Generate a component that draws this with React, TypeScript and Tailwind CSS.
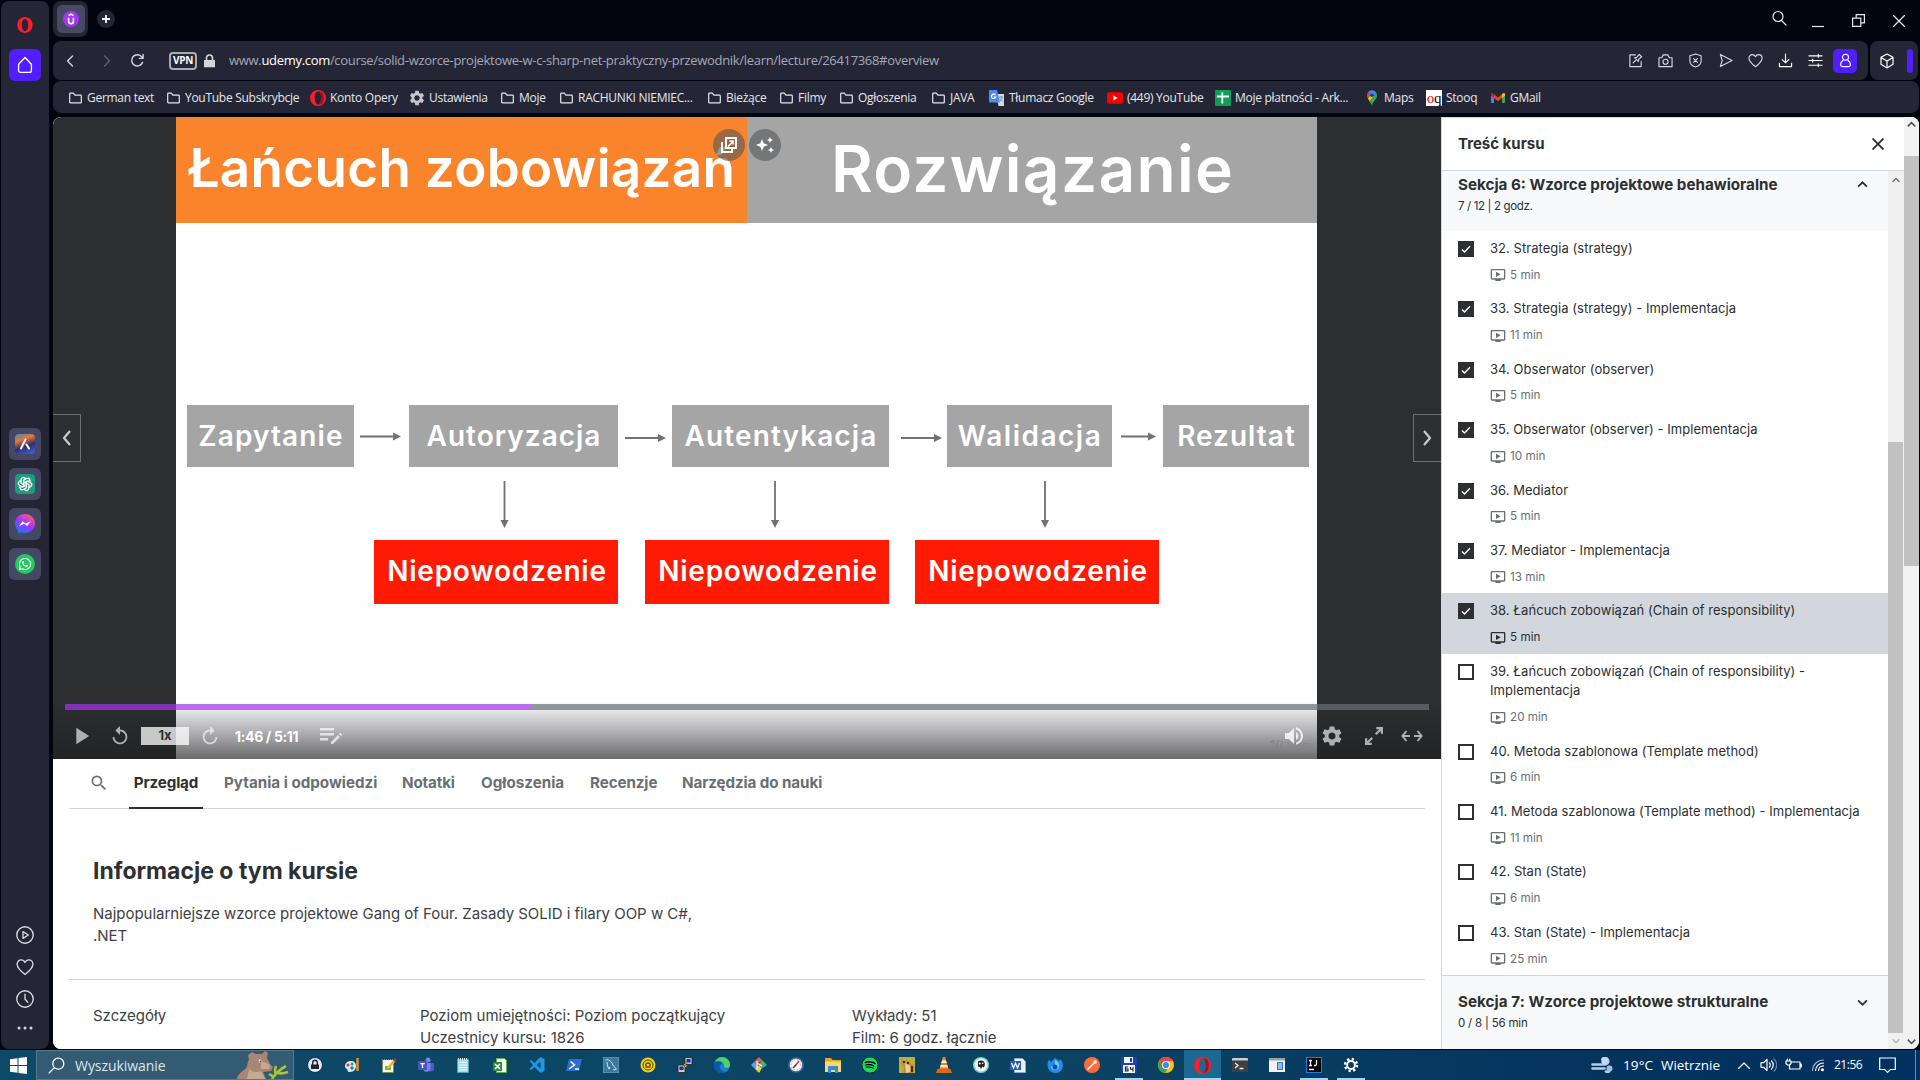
import React from "react";
import {
  MdPlayArrow, MdReplay, MdSettings, MdOndemandVideo, MdVolumeUp, MdSearch,
} from "react-icons/md";
import { FaWhatsapp, FaSpotify } from "react-icons/fa";
import { TbBrandOpenai } from "react-icons/tb";

const UI = "font-['Open_Sans','Noto_Sans',sans-serif]";
const UDEMY = "font-['Inter',sans-serif]";

type SvgProps = { className?: string; children: React.ReactNode; box?: string };
const Line = ({ className = "size-4", children, box = "0 0 16 16" }: SvgProps) => (
  <svg viewBox={box} className={"shrink-0 " + className} fill="none" stroke="currentColor" strokeWidth="1.2" strokeLinecap="round" strokeLinejoin="round">
    {children}
  </svg>
);
const Art = ({ className = "size-4", children, box = "0 0 16 16" }: SvgProps) => (
  <svg viewBox={box} className={"shrink-0 " + className}>{children}</svg>
);

const OperaO = ({ className = "size-4" }: { className?: string }) => (
  <Art className={className}>
    <path fillRule="evenodd" fill="#fa1e2d" d="M8 0a8 8 0 1 0 0 16A8 8 0 0 0 8 0Zm0 1.6c2 0 3.3 2.9 3.3 6.4S10 14.400 8 14.400 4.700 11.500 4.700 8 6 1.600 8 1.600Z" />
    <path fill="#a5101c" d="M8 1.600c2-.9 4.300.3 5.300 2.500 1 2.400 1 5.400 0 7.800-1 2.200-3.300 3.400-5.300 2.500 2 0 3.300-2.900 3.300-6.400S10 1.600 8 1.600Z" />
  </Art>
);
const RailOpera = () => (
  <Art className="mt-4 size-4">
    <path fillRule="evenodd" fill="#fa1e2d" d="M8 0C3.600 0 .3 3.600.3 8S3.600 16 8 16s7.700-3.600 7.700-8S12.400 0 8 0Zm0 2c2 0 3.200 2.700 3.200 6S10 14 8 14s-3.200-2.700-3.200-6S6 2 8 2Z" />
  </Art>
);
const Folder = () => (
  <Line className="h-[14px] w-[13px]" box="0 0 13 14">
    <path d="M.7 11.200V2.800c0-.4.3-.7.700-.7h2.900l1.700 2.100h5.600c.4 0 .7.300.7.700v6.300c0 .400-.3.700-.7.700H1.400c-.400 0-.7-.300-.7-.700Z" />
  </Line>
);
const Heart = ({ className = "size-4" }: { className?: string }) => (
  <Line className={className}><path d="M8 14.600C4 11.600 1 9 1 5.600 1 3.200 2.700 1.700 4.600 1.700 6 1.700 7.300 2.500 8 4c.7-1.500 2-2.300 3.400-2.300 1.900 0 3.600 1.500 3.600 3.900 0 3.400-3 6-7 9Z" /></Line>
);

/* ---------- browser chrome ---------- */

function SideRail() {
  const tile = "flex size-8 items-center justify-center rounded-md bg-[#454863]";
  return (
    <aside className="ml-px mt-px flex h-[1048px] w-12 shrink-0 flex-col items-center rounded-lg bg-[#242635] text-[#d7d9e2]">
      <RailOpera />
      <div className="mt-4 flex size-8 shrink-0 items-center justify-center rounded-md bg-[#501eff] text-white">
        <Line className="size-[18px]"><path d="M2.300 7.300 8 1.300l5.700 6v5.500c0 1-.7 1.700-1.700 1.700H4c-1 0-1.700-.7-1.700-1.700Z" /></Line>
      </div>
      <div className="mt-[347px] flex flex-col gap-2">
        <div className={tile}>
          <div className="flex size-5 items-center justify-center rounded bg-[linear-gradient(160deg,#3a8ecb_0%,#e8743a_30%,#2a2f6a_60%,#4466ff_100%)]">
            <Line className="size-4 text-white"><path strokeWidth="2" d="m4 12.500 4.500-9M9.500 8.500l2.500 4" /></Line>
          </div>
        </div>
        <div className={tile}><div className="flex size-5 items-center justify-center rounded bg-[#1f9b7d] text-white"><TbBrandOpenai className="size-4" /></div></div>
        <div className={tile}>
          <svg className="size-5" viewBox="0 0 20 20">
            <defs><linearGradient id="msg" x1="0.200" y1="1" x2="0.800" y2="0"><stop offset="0" stopColor="#0a7cff" /><stop offset=".5" stopColor="#a034ff" /><stop offset="1" stopColor="#ff5c70" /></linearGradient></defs>
            <path fill="url(#msg)" d="M10 0C4.400 0 0 4.100 0 9.500c0 2.900 1.200 5.400 3.200 7.100V20l3.200-1.700c1.100.4 2.300.6 3.600.6 5.600 0 10-4.100 10-9.400S15.600 0 10 0Z" />
            <path fill="#fff" d="m4 12.300 3.500-5.100 3.200 2.300L16 7l-3.800 5-3-2.300Z" />
          </svg>
        </div>
        <div className={tile}><div className="flex size-5 items-center justify-center rounded-full bg-[#25c863] text-white"><FaWhatsapp className="size-[14px]" /></div></div>
      </div>
      <div className="mt-[346px] flex flex-col items-center gap-[14px]">
        <Line className="size-[18px]"><circle cx="8" cy="8" r="7.300" /><path d="M6.200 5v6l4.800-3Z" /></Line>
        <Heart className="size-[18px]" />
        <Line className="size-[18px]"><circle cx="8" cy="8" r="7.300" /><path d="M8 3.600V8l2.500 3" /></Line>
        <Art className="size-4"><g fill="#d7d9e2"><circle cx="2" cy="6" r="1.500" /><circle cx="8" cy="6" r="1.500" /><circle cx="14" cy="6" r="1.500" /></g></Art>
      </div>
    </aside>
  );
}

function TabStrip() {
  return (
    <div className="flex h-[41px] items-start text-[#e8e8ee]">
      <div className="mt-px flex h-9 w-[35px] items-center justify-center rounded-lg bg-[#242635]">
        <div className="flex size-7 items-center justify-center rounded-[5px] bg-[#474a63]">
          <Art className="size-4"><circle cx="8" cy="8" r="8" fill="#a435f0" /><path fill="none" stroke="#fff" strokeWidth="1.600" d="M5.600 6.800v3.400a2.400 2.400 0 0 0 4.800 0V6.800M5.600 4.600 8 3.100l2.400 1.500" /></Art>
        </div>
      </div>
      <div className="ml-[9px] mt-[10px] flex size-[18px] items-center justify-center rounded-full bg-[#242635] text-white">
        <Line className="size-2" box="0 0 8 8"><path strokeWidth="1.800" d="M4 .5v7M.5 4h7" /></Line>
      </div>
      <div className="flex-1" />
      <Line className="mr-[25px] mt-[10px] size-4"><circle cx="7" cy="6.500" r="5" /><path d="m10.500 10.500 4.500 4.500" /></Line>
      <Line className="mr-7 mt-[13px] h-4 w-3" box="0 0 12 16"><path strokeLinecap="butt" d="M0 13.500h12" /></Line>
      <Line className="mr-7 mt-[14px] size-[13px]" box="0 0 13 13"><path strokeLinejoin="miter" d="M.6 4.200h8.200v8.200H.6ZM4.200 4V.6h8.200v8.200H9" /></Line>
      <Line className="mr-[14px] mt-[15px] size-3" box="0 0 12 12"><path d="m.5.5 11 11m0-11-11 11" /></Line>
    </div>
  );
}

function AddressBar() {
  return (
    <div className="flex h-[39px] gap-[2px] pr-px text-[#d6d8e0]">
      <div className="flex h-full w-[1815px] items-center rounded-lg bg-[#242635]">
        <Line className="ml-[13px] h-3 w-2" box="0 0 8 12"><path strokeWidth="1.400" d="M6.500 1 1.500 6l5 5" /></Line>
        <Line className="ml-[29px] h-3 w-2 text-[#62646f]" box="0 0 8 12"><path d="m1.500 1 5 5-5 5" /></Line>
        <Line className="ml-[19px] size-[15px]"><path strokeWidth="1.500" d="M13.400 10A6 6 0 1 1 12.600 4.200L14 5.600M14 1.500v4.200H10" /></Line>
        <div className={UI + " ml-[24px] flex h-[18px] w-7 items-center justify-center rounded border-2 border-[#a9abb5] text-[10px] font-bold tracking-[-0.3px] text-white"}>VPN</div>
        <Art className="ml-[7px] h-[14px] w-[11px]" box="0 0 11 14"><path fill="#d3d5da" d="M0 6h1.700V4a3.800 3.800 0 0 1 7.600 0v2H11v7.300H0Zm3.300 0h4.400V4a2.200 2.200 0 0 0-4.400 0Z" /></Art>
        <div className={UI + " ml-[14px] whitespace-nowrap text-[13px] tracking-[-0.31px] text-[#a3a9b8]"}>
          www.<span className="text-white">udemy.com</span>/course/solid-wzorce-projektowe-w-c-sharp-net-praktyczny-przewodnik/learn/lecture/26417368#overview
        </div>
        <div className="ml-auto mr-[11px] flex items-center gap-[15px]">
          <Line className="size-[15px]"><path d="M8 2H2v12.500h12V9M5.500 10.500 8 8M7 5l4 4 .5-2.500L14.500 4 12 1.500 9.500 4.500Z" /></Line>
          <Line className="size-[15px]"><path d="M1 5h3l1.500-3h5L12 5h3v9.500H1Z" /><circle cx="8" cy="9.300" r="2.700" /></Line>
          <Line className="size-[15px]"><path d="M8 1 14 3v5c0 3.500-2.500 6-6 7-3.500-1-6-3.500-6-7V3ZM6 6l4 4m0-4-4 4" /></Line>
          <Line className="size-[15px]"><path d="M2.500 1.500 15 8 2.500 14.500 4.500 8Z" /></Line>
          <Heart className="size-[15px]" />
          <Line className="size-[15px] text-white"><path d="M8 1v9M4.500 7 8 10.500 11.500 7M1.500 11v3.500h13V11" /></Line>
          <Line className="size-[15px] text-white"><path d="M1 3h14M1 8h14M1 13h14M11 1.500v3M5 6.500v3M11 11.500v3" /></Line>
          <div className="-ml-[5px] flex size-6 items-center justify-center rounded-[5px] bg-[#501eff] text-white">
            <Line className="size-[15px]"><circle cx="8" cy="4.500" r="3.200" /><path d="M5.500 7.800C3.500 9 2.800 10.500 2.800 12.500c0 1.200.7 2 2 2h6.400c1.300 0 2-.8 2-2 0-2-.7-3.500-2.700-4.700" /></Line>
          </div>
        </div>
      </div>
      <div className="flex h-full flex-1 items-center rounded-lg bg-[#242635]">
        <Line className="ml-[9px] size-4 text-white"><path d="M8 1 14 4.300v7L8 15l-6-3.700v-7ZM2 4.500 8 8l6-3.500M8 8v7" /></Line>
        <div className="ml-[12px] h-6 w-[6px] rounded-full bg-[#501eff]" />
      </div>
    </div>
  );
}

const GearSolid = () => <MdSettings className="-mx-px size-[18px] shrink-0 text-[#c4c6cc]" />;
const TranslateIcon = () => (
  <Art><path fill="#d5d8dd" d="M7 4h8v12H9.500Z" /><path fill="#4c8bf5" d="M0 0h8l3 12.500H1c-.6 0-1-.4-1-1Z" /><path fill="none" stroke="#fff" strokeWidth="1.100" d="M6.500 5A2.200 2.200 0 1 0 6.800 7H4.800" /><path stroke="#78909c" fill="none" d="M10 7h4M12 6v1m1.500 0c-.5 2-1.500 3-2.500 4m0-2.500 3 3" /></Art>
);
const YouTubeIcon = () => (
  <Art><rect y="2.300" width="16" height="11.400" rx="2.800" fill="#f00" /><path fill="#fff" d="m6.300 5.600 4.300 2.400-4.300 2.400Z" /></Art>
);
const SheetsIcon = () => <Art><rect width="16" height="16" rx="1" fill="#0f9d58" /><path stroke="#fff" strokeWidth="1.800" d="M2 6.500h12M7.300 2.500v11" /></Art>;
const MapsIcon = () => (
  <Art className="h-4 w-[14px]" box="0 0 14 16">
    <path fill="#34a853" d="M7 16c.4-2.500 1.300-3.800 2.600-5.400C11 9 12 7.600 12 5.200c0-.8-.2-1.500-.5-2.200L4.300 11.500C5.700 13 6.600 14 7 16Z" />
    <path fill="#fbbc04" d="M2.800 8.300c.4.900 1 2 1.800 3L9 6 5 5.500Z" /><path fill="#ea4335" d="M2 5.200c0 1.200.3 2.200.8 3.200L6 5 3 2.200C2.400 3 2 4 2 5.200Z" />
    <path fill="#4285f4" d="M3 2.100A5 5 0 0 1 7 .2c2 0 3.700 1.100 4.500 2.800L8.800 6.300 5.300 4.500Z" /><circle cx="7" cy="5.200" r="1.800" fill="#1a3f8b" />
  </Art>
);
const StooqIcon = () => (
  <div className="flex size-4 shrink-0 items-center justify-center bg-white font-['Liberation_Serif',serif] text-[15px] leading-4 text-black">
    <span className="tracking-[-0.3px] text-red-600">o</span><span>q</span>
  </div>
);
const GmailIcon = () => (
  <Art className="h-4 w-[14px]" box="0 0 14 16">
    <path fill="#4285f4" d="M0 5v7.300c0 .4.400.7.700.7H3V6Z" /><path fill="#34a853" d="M14 5v7.300c0 .4-.4.7-.7.700H11V6Z" />
    <path fill="#ea4335" d="M3 4.300 7 7.500l4-3.200V8l-4 3.200L3 8Z" /><path fill="#c5221f" d="M0 4.500c0-1.600 1.600-1.900 3-.4V8L0 5.800Z" /><path fill="#fbbc04" d="M14 4.500c0-1.600-1.600-1.900-3-.4V8l3-2.200Z" />
  </Art>
);

function Bookmarks() {
  const items: [string, string, React.ReactNode, string][] = [
    ["w-[98px]", "gap-[5px]", <Folder />, "German text"],
    ["w-[143px]", "gap-[5px]", <Folder />, "YouTube Subskrybcje"],
    ["w-[99px]", "gap-1", <OperaO />, "Konto Opery"],
    ["w-[92px]", "gap-1", <GearSolid />, "Ustawienia"],
    ["w-[59px]", "gap-[5px]", <Folder />, "Moje"],
    ["w-[148px]", "gap-[5px]", <Folder />, "RACHUNKI NIEMIEC..."],
    ["w-[72px]", "gap-[5px]", <Folder />, "Bieżące"],
    ["w-[60px]", "gap-[5px]", <Folder />, "Filmy"],
    ["w-[92px]", "gap-[5px]", <Folder />, "Ogłoszenia"],
    ["w-[57px]", "gap-[5px]", <Folder />, "JAVA"],
    ["w-[118px]", "gap-1", <TranslateIcon />, "Tłumacz Google"],
    ["w-[108px]", "gap-1", <YouTubeIcon />, "(449) YouTube"],
    ["w-[150px]", "gap-1", <SheetsIcon />, "Moje płatności - Ark..."],
    ["w-[61px]", "gap-[5px]", <MapsIcon />, "Maps"],
    ["w-[65px]", "gap-1", <StooqIcon />, "Stooq"],
    ["w-[60px]", "gap-[5px]", <GmailIcon />, "GMail"],
  ];
  return (
    <div className={UI + " mt-px flex h-8 items-center rounded-lg bg-[#242635] pl-4 text-[12px] tracking-[-0.28px] text-[#e6e7ec]"}>
      {items.map(([w, gap, icon, label]) => (
        <div key={label} className={"flex shrink-0 items-center whitespace-nowrap pt-[2px] " + w + " " + gap}>{icon}<span>{label}</span></div>
      ))}
    </div>
  );
}

/* ---------- video ---------- */

const steps = [
  { label: "Zapytanie", box: "left-[11px] w-[167px]", tr: "tracking-[1.1px]" },
  { label: "Autoryzacja", box: "left-[233px] w-[209px]", tr: "tracking-[1px]" },
  { label: "Autentykacja", box: "left-[496px] w-[217px]", tr: "tracking-[1.1px]" },
  { label: "Walidacja", box: "left-[771px] w-[165px]", tr: "tracking-[1.5px]" },
  { label: "Rezultat", box: "left-[987px] w-[146px]", tr: "tracking-[1px]" },
];
const failures = ["left-[198px]", "left-[469px]", "left-[739px]"];

function Slide() {
  return (
    <div className={UDEMY + " relative h-[642px] w-[1141px] overflow-hidden bg-[#fefdff] font-semibold text-white"}>
      <div className="flex h-[106px] whitespace-nowrap">
        <div className="flex w-[571px] items-center justify-center bg-[#fa842c] pb-[2px] text-[53px] tracking-[0.3px]">Łańcuch zobowiązań</div>
        <div className="flex flex-1 items-center justify-center bg-[#a5a5a5] pb-[2px] pl-px text-[64px] tracking-[1.300px]">Rozwiązanie</div>
      </div>
      {steps.map((s) => (
        <div key={s.label} className={"absolute top-[288px] flex h-[62px] items-center justify-center bg-[#a5a5a5] pl-px text-[28px] " + s.box + " " + s.tr}>{s.label}</div>
      ))}
      {failures.map((left) => (
        <div key={left} className={"absolute top-[423px] flex h-[64px] w-[244px] items-center justify-center bg-[#ff1b03] pb-[2px] pl-[2px] text-[28px] tracking-[0.75px] " + left}>Niepowodzenie</div>
      ))}
      <svg className="absolute left-0 top-0 h-[642px] w-[1141px]" stroke="#717171" strokeWidth="1.800" fill="#717171">
        <path d="M184 319.500h34M449 321h34M725 321h34M945 319.500h28" />
        <path stroke="none" d="m217 315.500 8 4-8 4ZM482 317l8 4-8 4ZM758 317l8 4-8 4ZM972 315.500l8 4-8 4Z" />
        <path d="M328.500 364v40M599 364v40M869 364v40" />
        <path stroke="none" d="M324.500 403h8l-4 8ZM595 403h8l-4 8ZM865 403h8l-4 8Z" />
      </svg>
    </div>
  );
}

function Player() {
  const nav = "absolute top-[297px] flex h-12 w-7 items-center justify-center border border-[#6a6f73] text-white/75 bg-[#2d2f31]";
  return (
    <div className="relative flex h-[642px] justify-center overflow-hidden rounded-tl-lg bg-[#2d2e30] pr-[1px]">
      <Slide />
      <div className="absolute left-[660px] top-3 flex gap-1 text-white">
        <div className="flex size-8 items-center justify-center rounded-full bg-[#55565a]/60">
          <Art className="size-4"><path fill="none" stroke="#fff" strokeWidth="2" d="M5 1h10v10H5ZM1 5v10h10v-3" /><path fill="none" stroke="#fff" strokeWidth="1.600" d="m7 9.500 5-5M8.500 4H12v3.500" /></Art>
        </div>
        <div className="flex size-8 items-center justify-center rounded-full bg-[#55565a]/60">
          <Art className="size-[18px]" box="0 0 18 18"><path fill="#fff" d="m6 3 1.700 4.300L12 9 7.700 10.700 6 15l-1.700-4.300L0 9l4.300-1.700ZM14 1l.9 2.100L17 4l-2.100.9L14 7l-.9-2.100L11 4l2.100-.9ZM15 11l.9 2.100L18 14l-2.100.9L15 17l-.9-2.100L12 14l2.100-.9Z" /></Art>
        </div>
      </div>
      <div className={nav + " left-0 border-l-0"}><Line className="h-4 w-[9px]" box="0 0 9 16"><path strokeWidth="2.200" strokeLinecap="butt" d="m8 1-6 7 6 7" /></Line></div>
      <div className={nav + " right-0 border-r-0"}><Line className="h-4 w-[9px]" box="0 0 9 16"><path strokeWidth="2.200" strokeLinecap="butt" d="m1 1 6 7-6 7" /></Line></div>
      <div className="absolute inset-x-0 bottom-0 h-[58px] bg-linear-to-b from-[#1c1d1f]/0 to-[#1c1d1f]/65" />
      <div className="absolute bottom-[49px] left-3 flex h-[6px] w-[1364px]"><div className="w-[467px] bg-[#a435f0]/70" /><div className="flex-1 bg-[#6a6f73]/70" /></div>
      <div className="absolute bottom-[6px] right-[127px] flex items-center gap-[3px] text-[8px] leading-4 text-[#858587]"><Line className="size-[14px]" box="0 0 16 16"><path strokeWidth="1.400" d="M1 5c2-3 4-3 3 3s1 6 3 2l2-7c-2 7-1 9 1 9s4-4 4-8" /></Line><span className={UDEMY}>Udemy</span></div>
      <div className="absolute inset-x-0 bottom-[10px] flex h-[26px] items-center pl-[14px] pr-[18px] text-white/90">
        <MdPlayArrow className="size-[28px] opacity-70" />
        <MdReplay className="ml-[14px] size-[22px] opacity-70" />
        <div className={UDEMY + " ml-[10px] flex h-[18px] w-12 items-center justify-center bg-white/75 text-[13px] font-bold text-[#2d2f31]"}>1x</div>
        <MdReplay className="ml-[10px] size-[22px] -scale-x-100 opacity-70" />
        <span className={UDEMY + " ml-[14px] w-[68px] whitespace-nowrap text-[14px] font-bold tracking-[-0.35px] text-white"}>1:46 / 5:11</span>
        <Art className="ml-[17px] h-[18px] w-[22px] opacity-70" box="0 0 22 18"><path fill="#fff" d="M0 1h14v2.500H0ZM0 6h14v2.500H0ZM0 11h8v2.500H0ZM11 15l7-7 2 2-7 7h-2ZM19 7l1.200-1.200 2 2L21 9Z" /></Art>
        <div className="flex-1" />
        <MdVolumeUp className="size-6 opacity-90" />
        <MdSettings className="ml-[14px] size-6 opacity-70" />
        <Line className="ml-[21px] size-[18px] opacity-70"><path strokeWidth="2" strokeLinecap="butt" strokeLinejoin="miter" d="m9.500 6.500 5-5M10 1h5v5M6.500 9.500l-5 5M6 15H1v-5" /></Line>
        <Line className="ml-[18px] h-[14px] w-[22px] opacity-70" box="0 0 22 14"><path strokeWidth="2" strokeLinecap="butt" strokeLinejoin="miter" d="M5.500 2 1.500 7l4 5M2 7h7M16.500 2l4 5-4 5M20 7h-7" /></Line>
      </div>
    </div>
  );
}

/* ---------- course page ---------- */

function Overview() {
  const tab = "flex h-[49px] items-center whitespace-nowrap";
  return (
    <div className={UDEMY + " h-[290px] overflow-hidden bg-white px-4 text-[#3e4143]"}>
      <div className="flex h-[50px] border-b border-[#d1d7dc] pl-5 text-[15.200px] font-bold text-[#6a6f73]">
        <div className="flex h-12 w-10 items-center"><MdSearch className="size-5" /></div>
        <div className={tab + " h-[50px] w-[74px] justify-center border-b-2 border-[#2d2f31] tracking-[-0.15px] text-[#2d2f31]"}>Przegląd</div>
        <div className={tab + " ml-[21px] w-[178px]"}>Pytania i odpowiedzi</div>
        <div className={tab + " w-[79px] tracking-[-0.15px]"}>Notatki</div>
        <div className={tab + " w-[109px]"}>Ogłoszenia</div>
        <div className={tab + " w-[92px] tracking-[-0.1px]"}>Recenzje</div>
        <div className={tab + " tracking-[-0.1px]"}>Narzędzia do nauki</div>
      </div>
      <div className="h-[171px] border-b border-[#d1d7dc] pl-6 pt-[46px]">
        <h2 className="text-[23px] font-bold leading-8 text-[#2d2f31]">Informacje o tym kursie</h2>
        <p className="mt-[16px] whitespace-nowrap text-[15px] leading-[22px] tracking-[-0.02px]">Najpopularniejsze wzorce projektowe Gang of Four. Zasady SOLID i filary OOP w C#,<br />.NET</p>
      </div>
      <div className="flex pl-6 pt-[25px] text-[15px] leading-[22px]">
        <div className="w-[327px]">Szczegóły</div>
        <div className="w-[432px]">Poziom umiejętności: Poziom początkujący<br />Uczestnicy kursu: 1826</div>
        <div className="tracking-[-0.05px]">Wykłady: 51<br />Film: 6 godz. łącznie</div>
      </div>
    </div>
  );
}

type Lecture = { title: string; time: string; done?: boolean; active?: boolean };
const lectures: Lecture[] = [
  { title: "32. Strategia (strategy)", time: "5 min", done: true },
  { title: "33. Strategia (strategy) - Implementacja", time: "11 min", done: true },
  { title: "34. Obserwator (observer)", time: "5 min", done: true },
  { title: "35. Obserwator (observer) - Implementacja", time: "10 min", done: true },
  { title: "36. Mediator", time: "5 min", done: true },
  { title: "37. Mediator - Implementacja", time: "13 min", done: true },
  { title: "38. Łańcuch zobowiązań (Chain of responsibility)", time: "5 min", done: true, active: true },
  { title: "39. Łańcuch zobowiązań (Chain of responsibility) - Implementacja", time: "20 min" },
  { title: "40. Metoda szablonowa (Template method)", time: "6 min" },
  { title: "41. Metoda szablonowa (Template method) - Implementacja", time: "11 min" },
  { title: "42. Stan (State)", time: "6 min" },
  { title: "43. Stan (State) - Implementacja", time: "25 min" },
];

const Chevron = ({ className }: { className: string }) => (
  <Line className={className} box="0 0 12 8"><path strokeWidth="2" strokeLinecap="butt" strokeLinejoin="miter" d="m1 6.500 5-5 5 5" /></Line>
);

function LectureRow({ title, time, done, active }: Lecture) {
  return (
    <div className={"flex px-4 py-2 " + (active ? "bg-[#d1d7dc]" : "bg-white")}>
      {done ? (
        <div className="mt-[2px] size-4 shrink-0 bg-[#2d2f31] text-white"><Line className="size-4"><path strokeWidth="1.300" strokeLinecap="butt" strokeLinejoin="miter" d="m4 8.500 2.500 2.500L12 5.300" /></Line></div>
      ) : (
        <div className="mt-[2px] size-4 shrink-0 border-2 border-[#2d2f31]" />
      )}
      <div className="ml-4 flex-1">
        <div className="text-[13px] leading-[19.400px] tracking-[0.04px] text-[#2d2f31]">{title}</div>
        <div className={"mt-[9px] flex h-4 items-center gap-[4px] text-[11.700px] " + (active ? "text-[#2d2f31]" : "text-[#6a6f73]")}>
          <MdOndemandVideo className="size-4" /><span>{time}</span>
        </div>
      </div>
    </div>
  );
}

function CoursePanel() {
  return (
    <div className={UDEMY + " flex h-full w-[463px] flex-col border-l border-[#d1d7dc] bg-white text-[#2d2f31]"}>
      <div className="flex h-[54px] shrink-0 items-center border-b border-t border-[#d1d7dc] pl-4 pr-5">
        <span className="flex-1 text-[15px] font-bold">Treść kursu</span>
        <Line className="size-3" box="0 0 12 12"><path strokeWidth="1.800" strokeLinecap="butt" d="m.5.5 11 11m0-11-11 11" /></Line>
      </div>
      <div className="flex min-h-0 flex-1">
        <div className="w-[446px]">
          <div className="flex h-[60px] bg-[#f7f9fa] pl-4 pr-5">
            <div className="flex-1">
              <div className="mt-[4px] text-[15.200px] font-bold leading-5">Sekcja 6: Wzorce projektowe behawioralne</div>
              <div className="mt-[3px] text-[11.500px] leading-4 tracking-[-0.35px]">7 / 12 | 2 godz.</div>
            </div>
            <Chevron className="mt-[10px] h-[7px] w-[11px]" />
          </div>
          {lectures.map((l) => <LectureRow key={l.title} {...l} />)}
          <div className="flex h-[74px] border-t border-[#d1d7dc] bg-[#f7f9fa] pl-4 pr-5">
            <div className="flex-1">
              <div className="mt-4 text-[15.200px] font-bold leading-5 tracking-[0.05px]">Sekcja 7: Wzorce projektowe strukturalne</div>
              <div className="mt-[3px] text-[11.500px] leading-4 tracking-[-0.2px]">0 / 8 | 56 min</div>
            </div>
            <Chevron className="mt-[23px] h-[7px] w-[11px] rotate-180" />
          </div>
        </div>
        <div className="flex w-4 flex-col items-center bg-[#f0f0f0] pr-px text-[#606060]">
          <Chevron className="mt-[6px] h-[6px] w-[8px]" />
          <div className="mt-[259px] h-[591px] w-full bg-[#c1c1c1]" />
          <Chevron className="mt-[5px] h-[6px] w-[8px] rotate-180 text-[#b0b0b0]" />
        </div>
      </div>
    </div>
  );
}

/* ---------- taskbar ---------- */

const apps: { icon: React.ReactNode; state?: "open" | "active" }[] = [
  { icon: <Art><circle cx="8" cy="8" r="7.500" fill="#dfe6f5" stroke="#172a55" /><path fill="#23242c" d="M4 7.500h8V12H4Z" /><path fill="none" stroke="#23242c" strokeWidth="1.400" d="M5.700 8V5.500a2.300 2.300 0 0 1 4.600 0V8" /></Art> },
  { icon: <Art><path fill="#dbe9f0" d="M1 9c0-3 3-5 6-5s5 2 5 5-2 6-6 6c-3 0-2-2-3-3S1 11 1 9Z" /><circle cx="4" cy="8" r="1.500" fill="#e33" /><circle cx="8" cy="7" r="1.500" fill="#3a3" /><circle cx="8" cy="11" r="1.700" fill="#27c" /><path stroke="#d99034" strokeWidth="2.500" d="M13.500 1v13" /></Art> },
  { icon: <Art><path fill="#f4f6ee" stroke="#7a8a6a" d="M1.500 2.500h11v13h-11Z" /><path stroke="#333" strokeDasharray="1 1" strokeWidth="2" d="M2 2h11" /><path stroke="#7eb63a" strokeWidth="4" d="M4 11h6" /><path stroke="#f0b429" strokeWidth="2.500" d="m7 11 7-8" /><path stroke="#c22" strokeWidth="2.500" d="m13 4 2-2.500" /></Art> },
  { icon: <Art><circle cx="10" cy="3" r="2.500" fill="#7b83eb" /><path fill="#5059c9" d="M9 6h7v5a3.500 3.500 0 0 1-7 0Z" /><path fill="#7b83eb" d="M5 6h7.500v5.500a4 4 0 0 1-7.500 1Z" /><rect y="4" width="9" height="9" rx="1" fill="#4b53bc" /><path stroke="#fff" strokeWidth="1.300" d="M2.300 6.600h4.400M4.500 6.600V11" /></Art> },
  { icon: <Art><path fill="#a9dcec" stroke="#5d9eb5" d="M2.500 2.500h11v13h-11Z" /><path stroke="#e9f6fa" d="M4 5.500h8M4 8h8M4 10.500h8M4 13h8" /><path stroke="#eee" strokeDasharray="1 1" strokeWidth="2" d="M3 2h10" /></Art> },
  { icon: <Art><path fill="#f3faf0" stroke="#62b04c" d="M4.500 1.500h8l2 2v12h-10Z" /><rect x="1" y="5" width="9" height="9" fill="#2e8b3d" /><path stroke="#fff" strokeWidth="1.500" d="m3 7 5 5m0-5-5 5" /></Art> },
  { icon: <Art><path fill="#2196e3" d="m11.500 0 4 2v12l-4 2-6-6L2 13l-1.500-1L4 8 .5 4 2 3l3.500 3Zm0 4.500L7.500 8l4 3.500Z" /></Art> },
  { icon: <Art><path fill="#2c6fcf" d="M3 2h13l-3 12H0Z" /><path fill="none" stroke="#fff" strokeWidth="1.500" d="m4.500 4.500 4 3.500-5.500 4M9 12h4" /></Art> },
  { icon: <Art><rect width="16" height="16" rx="1" fill="#39799c" stroke="#7cb0c9" strokeWidth=".8" /><path fill="none" stroke="#d9edf5" d="M2.500 3c4-1 6 2 7 4 1 2.500 2 3 4 5l-2 .5c0 1-.500 1-1 0M4 5c0 3 1 5 2 7l1-2" /></Art> },
  { icon: <Art><circle cx="8" cy="8" r="7.500" fill="#f2cf1d" /><circle cx="8" cy="8" r="5" fill="none" stroke="#574500" /><circle cx="8" cy="8" r="2.200" fill="none" stroke="#574500" strokeWidth="1.300" /></Art> },
  { icon: <Art><path fill="#c8ccd4" stroke="#222" strokeWidth=".8" d="M8 .5h7v7H8ZM1 8h7v7.500H1Z" /><path fill="#1a2ac0" d="M9.500 2h4v3.500h-4ZM2.500 9.500h4V13h-4Z" /><path fill="#ffe81a" stroke="#222" strokeWidth=".4" d="m12 4-6 4 2.500.5L4 13l7-4.500-2.500-.5Z" /></Art> },
  { icon: <Art><circle cx="8" cy="8" r="8" fill="#1b7fd0" /><path fill="#4fd06a" d="M8 0a8 8 0 0 1 8 8c0 2-1.500 3-3.500 3S10 9.500 10 8.500C10 5 6 3 1 5 2 2 5 0 8 0Z" /><path fill="#0c59a4" d="M1 5c5-2 7 .5 7 2-2 .500-2.500 2-2 4 .7 2.500 3 4 6 4A8 8 0 0 1 0 8Z" /></Art> },
  { icon: <Art><path fill="#f05b4f" d="m8 0 3 3-5 5-3-3Z" /><path fill="#5ca3e6" d="m3 5 4 4-3 3-4-4Z" /><path fill="#f1c84b" d="m8 8 3 3-3 5-4-4Z" /><path fill="#4fb06d" d="m11 3 5 5-5 3.500L7.500 8Z" /><path stroke="#fff" strokeWidth="1.200" fill="none" d="M6 4v8M6 6l5 3" /></Art> },
  { icon: <Art><circle cx="8" cy="8" r="7" fill="#f6f6f6" stroke="#3f6ca6" strokeWidth="1.600" /><circle cx="8" cy="8" r="5" fill="none" stroke="#999" strokeDasharray="1 2" /><path stroke="#d33" strokeWidth="1.500" d="m7 9 4-5" /><path stroke="#333" strokeWidth="1.300" d="m8 8-3 3" /></Art> },
  { icon: <Art><path fill="#e0a722" d="M0 1h6l1.500 2H16v4H0Z" /><path fill="#ffd766" d="M0 4.500h16V15H0Z" /><path fill="#2e8be0" d="M3 9h10v7h-3v-3H6v3H3Z" /></Art> },
  { icon: <FaSpotify className="size-4 rounded-full bg-black text-[#1ed760]" /> },
  { icon: <Art><rect width="16" height="16" fill="#b9b13a" /><path fill="#c98a48" d="M2 2l3 2h5l5 5v7H4l1-6-3-4Z" /><path fill="#e8cf9a" d="m6 6 5 3v6l-4 1Z" /><path fill="#4a2a12" d="M4 4h2v2H4ZM8 5h2v2H8ZM12 9h2v6h-2Z" /></Art> },
  { icon: <Art><path fill="#f58220" d="m6.800 0h2.400l3.300 12h-9Z" /><path fill="#eee" d="M6 3.500h4l.7 2.500H5.300ZM4.700 8h6.600l.6 2.200H4.100Z" /><path fill="#e06a10" d="M1.500 12h13l1.500 4H0Z" /></Art> },
  { icon: <Art><circle cx="8" cy="8" r="8" fill="#7fd2d6" /><circle cx="8" cy="8" r="6.500" fill="#f5f7f7" /><path fill="#222" d="M5 4.500c2-1.500 5-1.200 6.200.5 1 1.700.8 4-.4 5.500l-1.300-1L8 12l-1-2-2-.500Z" /><circle cx="6.800" cy="6.500" r="1.100" fill="#fff" /><circle cx="9.700" cy="6.300" r=".8" fill="#fff" /></Art> },
  { icon: <Art><path fill="#eef3fb" stroke="#8da9d2" d="M4.500 1.500h8l3 3v11h-11Z" /><rect y="4" width="11" height="9" fill="#2b5eb0" /><path fill="none" stroke="#fff" strokeWidth="1.200" d="m1.500 6 2 5 2-5 2 5 2-5" /></Art> },
  { icon: <Art><path fill="#1d8fe8" d="M8 1c2 1 3 2 4 3l1-2c2 2 3 4 3 6.500A7.500 7.500 0 0 1 8 16 7.500 7.500 0 0 1 .500 8.500C.500 6 1 4 2.500 2.500L4 5Z" /><path fill="#6fd0f5" d="M8 3c3 1 4 3 4 6a4 4 0 0 1-8 0l3 1 1-2Z" /><circle cx="8" cy="10" r="2.500" fill="#2446a8" /></Art> },
  { icon: <Art><circle cx="8" cy="8" r="8" fill="#ff6c37" /><path stroke="#fff" strokeWidth="1.500" strokeLinecap="round" d="m4 12 6-6" /><circle cx="11" cy="5" r="1.800" fill="#fff" /></Art> },
  { icon: <Art><path fill="#1d3fb8" d="M0 0h16v16H0Z" /><path fill="#f2f4fa" d="M3 0h9v6H3ZM2 8h12v8H2Z" /><path fill="#1d3fb8" d="M9 1h2v4H9Z" /><path fill="none" stroke="#222" strokeWidth="1.100" d="M7 10H4.500v4H7v-2H4.500M9.500 10v2.300H12M12 10v4.500" /></Art>, state: "open" },
  { icon: <Art><circle cx="8" cy="8" r="8" fill="#fbc116" /><path fill="#ea4335" d="M1.100 4A8 8 0 0 1 14.900 4H8L5 9.500Z" /><path fill="#34a853" d="M1.100 4A8 8 0 0 0 7 15.900L10.500 10 5 10Z" /><circle cx="8" cy="8" r="4" fill="#fff" /><circle cx="8" cy="8" r="3.100" fill="#4285f4" /></Art> },
  { icon: <OperaO className="size-[17px]" />, state: "active" },
  { icon: <Art><rect y="1" width="16" height="14" rx="1" fill="#3b4045" /><path fill="#c9ccd0" d="M0 2a1 1 0 0 1 1-1h14a1 1 0 0 1 1 1v1.500H0Z" /><path fill="none" stroke="#eee" strokeWidth="1.300" d="m3 6 3 2.500L3 11M7.500 11.500h4" /></Art> },
  { icon: <Art><rect y="1" width="16" height="14" fill="#f2f2f2" /><path fill="#9a9fa5" d="M0 1h16v2.500H0Z" /><path fill="#2176d2" d="M8 5h6v8H8Z" /><path stroke="#fff" d="M9 7h4M9 9h4M9 11h4" /></Art> },
  { icon: <Art><rect x=".5" y=".5" width="15" height="15" fill="#000" stroke="#1c7df0" /><path fill="none" stroke="#fff" strokeWidth="1.300" d="M3 3.500h3M4.500 3.500v5M3 8.500h3M10.500 3v4c0 1.500-1.500 1.700-2.500 1.300M3 12.500h5" /></Art>, state: "open" },
  { icon: <Art><g fill="none" stroke="#fff"><circle cx="8" cy="8" r="3.900" strokeWidth="2" /><circle cx="8" cy="8" r="6" strokeWidth="2.400" strokeDasharray="2.300 2.412" /></g></Art>, state: "open" },
];

function Taskbar() {
  return (
    <div className={UI + " mt-px flex h-[30px] items-stretch bg-[linear-gradient(90deg,#0d4a68_0%,#0c4363_55%,#04335e_85%,#043160_100%)] text-white"}>
      <div className="flex w-9 items-center justify-center pl-px">
        <Art className="size-[17px]" box="0 0 17 17"><path fill="#fff" d="m0 2.300 7.500-1V8H0ZM8.500 1.100 17 0v8H8.500ZM0 9h7.500v6.700L0 14.700ZM8.500 9H17v8l-8.500-1.100Z" /></Art>
      </div>
      <div className="flex w-[258px] items-center border border-[#56798c] bg-[#335c74]">
        <Line className="ml-[11px] size-[17px]"><circle cx="9.700" cy="6.300" r="5.200" /><path d="M6 10 1 15" /></Line>
        <span className="ml-[10px] w-[162px] text-[14px] tracking-[-0.05px] text-[#dbe5ea]">Wyszukiwanie</span>
        <svg viewBox="0 0 52 28" className="h-7 w-[52px]">
          <path fill="#a98673" d="M0 28c1-6 5-7 9-11 2-3 1-6 3-8L11 4l4-3 4 2h6l3-3 3 2-1 5 3 6 3 3-2 4-8 1 3 7Z" /><path fill="#c7a893" d="M24 11c4 0 6 1 9 3l-1 4-8 0ZM12 18c4 3 7 4 12 2l4 8H10Z" />
          <circle cx="23" cy="10" r="1.400" fill="#fff" /><circle cx="23.300" cy="10.200" r=".8" fill="#222" /><path fill="none" stroke="#a7c639" strokeWidth="2.600" d="M35 28c3-5 7-9 14-13M39 23c-2-3-1-5 0-8M41 22c4 1 7 0 10-1M37 26l-5-3" />
        </svg>
      </div>
      <div className="ml-[2px] flex">
        {apps.map((a, i) => (
          <div key={i} className={"flex w-[37px] flex-col items-center " + (a.state === "active" ? "bg-[#1b6891]" : "")}>
            <div className="flex h-[28px] items-center pt-[2px]">{a.icon}</div>
            {a.state === "open" && <div className="h-[2px] w-7 bg-[#9fd5f7]" />}
            {a.state === "active" && <div className="h-[2px] w-full bg-[#9fd5f7]" />}
          </div>
        ))}
      </div>
      <div className="ml-auto flex w-[329px] items-center whitespace-nowrap">
        <Art className="h-4 w-[23px]" box="0 0 23 16"><path fill="none" stroke="#b8cde6" strokeWidth="2.600" strokeLinecap="round" d="M1.500 11.500h12M1.500 7.500h12a3.300 3.300 0 1 0-2-5.500M15 14.500a2.500 2.500 0 1 0 2.500-4.500" /><circle cx="13.500" cy="4" r="3.200" fill="#c9daee" /><circle cx="18.500" cy="11.500" r="3" fill="#a4bfdf" /></Art>
        <span className="ml-[9px] w-[38px] text-[13.500px] tracking-[0.1px]">19°C</span>
        <span className="w-[76px] text-[13.500px] tracking-[-0.05px]">Wietrznie</span>
        <Line className="ml-px h-[7px] w-3" box="0 0 12 7"><path d="m.5 6.500 5.500-5.500 5.500 5.500" /></Line>
        <Line className="ml-[10px] h-[14px] w-[17px]" box="0 0 17 14"><path d="M1 4.700h2.500L7 1.500v11L3.500 9.300H1ZM9.300 4.800a3 3 0 0 1 0 4.400M11.500 3a5.500 5.500 0 0 1 0 8" /><path opacity=".4" d="M14 1a8 8 0 0 1 0 12" /></Line>
        <Line className="ml-2 h-[14px] w-[17px]" box="0 0 17 14"><path d="M7 4h8v7H4.500V7M15 6h1.300v3H15M1 3h5v2.500L4.500 7h-2L1 5.500ZM2.300 3V1M4.700 3V1" /></Line>
        <Line className="ml-[9px] size-[14px]" box="0 0 14 14"><path d="M1.500 12.500A11 11 0 0 1 12.500 2" opacity=".6" /><path d="M4.500 12.500a8 8 0 0 1 8-7.500M7.500 12.500a5 5 0 0 1 5-4.700" /><circle cx="11.500" cy="11.800" r=".9" fill="#fff" /></Line>
        <span className="ml-[9px] text-[12px] tracking-[-0.5px]">21:56</span>
        <Line className="ml-auto mr-[19px] h-4 w-[17px]" box="0 0 17 16"><path strokeLinejoin="miter" d="M.7 1h15.600v11.500h-5L8.500 15.300 5.700 12.500h-5Z" /></Line>
        <div className="mr-1 h-full w-px bg-[#7089a4]" />
      </div>
    </div>
  );
}

export default function App() {
  return (
    <div className="flex h-[1080px] w-[1920px] flex-col overflow-hidden bg-[#02040f]">
      <div className="flex h-[1049px] gap-1">
        <SideRail />
        <div className="flex h-[1049px] w-[1866px] flex-col">
          <TabStrip />
          <AddressBar />
          <Bookmarks />
          <div className="mt-1 flex h-[932px] w-[1866px] overflow-hidden rounded-lg bg-white">
            <div className="w-[1388px] shrink-0">
              <Player />
              <Overview />
            </div>
            <CoursePanel />
            <div className="flex w-[15px] flex-col items-center bg-[#f1f1f1] text-[#505050]">
              <Chevron className="mt-1 h-[7px] w-[9px]" />
              <div className="mt-[28px] h-[410px] w-full bg-[#c1c1c1]" />
              <Chevron className="mb-1 mt-auto h-[7px] w-[9px] rotate-180" />
            </div>
          </div>
        </div>
      </div>
      <Taskbar />
    </div>
  );
}
